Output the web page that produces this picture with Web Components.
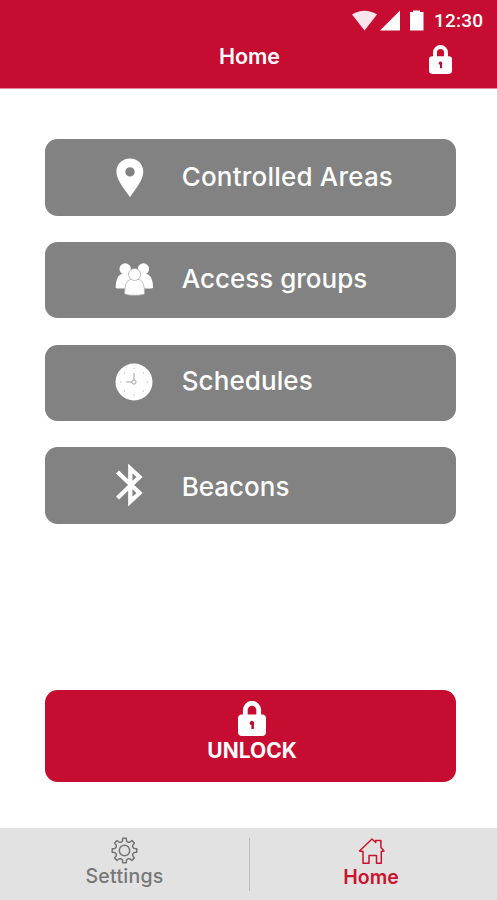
<!DOCTYPE html>
<html lang="en">
<head>
<meta charset="utf-8">
<title>Home</title>
<style>
html,body{margin:0;height:100%}
body{background:#fff;font-family:Inter,"Liberation Sans",sans-serif;overflow:hidden}
</style>
</head>
<body>
<access-app></access-app>
<script>
const define = (name, html) => customElements.define(name, class extends HTMLElement {
  constructor() {
    super();
    const t = document.createElement('template');
    t.innerHTML = html;
    this.attachShadow({ mode: 'open' }).append(t.content.cloneNode(true));
  }
});

define('lock-icon', `<style>:host{display:block;width:28px;height:35px}svg{display:block;width:100%;height:100%}</style>
<svg viewBox="0 0 28 35"><path d="M7.300 16V9.200a6.700 6.900 0 0 1 13.400 0V16" fill="none" stroke="#fff" stroke-width="4.800"/><rect y="13.600" width="28" height="21.400" rx="4" fill="#fff"/><path d="M12 23.400a2.300 2.300 0 1 1 3.900 0v4.600h-2.500v-4z" fill="#b51032"/></svg>`);

define('pin-icon', `<style>:host{display:block}svg{display:block}</style>
<svg width="29" height="40" viewBox="-1 0 29 40"><path fill="#fff" fill-rule="evenodd" d="M14 .5C6.300.5.400 6.200.400 13.800.400 22 8.500 31 14 39.300 19.500 31 27.300 22 27.300 13.800 27.300 6.200 21.600.5 14 .5zM14 9.200a4.700 4.700 0 1 1 0 9.400 4.700 4.700 0 0 1 0-9.400z"/></svg>`);

define('people-icon', `<style>:host{display:block}svg{display:block}</style>
<svg width="39" height="33" viewBox="0 0 39 33"><g fill="#fff">
<circle cx="10.200" cy="6" r="5.700"/><circle cx="28.400" cy="6" r="5.700"/>
<path d="M.700 24.500c0-8 2.400-12.500 6.300-13.500h7c3 0 5 3 5.500 14.500H4c-2 0-3.300-.2-3.300-1z"/>
<path d="M38 24.500c0-8-2.400-12.500-6.300-13.500h-7c-3 0-5 3-5.500 14.500h15.500c2 0 3.300-.2 3.300-1z"/></g>
<g fill="#fff" stroke="#acacac" stroke-width=".8"><path d="M9.700 30.500c0-8.500 2-12.500 5.500-14h8.900c3.500 1.500 5.500 5.500 5.500 14 0 2.400-19.900 2.400-19.900 0z"/><circle cx="19.600" cy="11.500" r="6"/></g></svg>`);

define('clock-icon', `<style>:host{display:block}svg{display:block}</style>
<svg width="38" height="38" viewBox="0 0 38 38"><circle cx="19" cy="19" r="18.500" fill="#fff"/>
<g fill="#bdbdbd"><circle cx="9.500" cy="10" r=".7"/><circle cx="28.500" cy="10" r=".7"/><circle cx="9.500" cy="28" r=".7"/><circle cx="28.500" cy="28" r=".7"/><circle cx="19" cy="5.500" r=".6"/><circle cx="19" cy="32" r=".7"/><circle cx="5.700" cy="19" r=".8"/><circle cx="32.300" cy="19" r=".8"/></g>
<g fill="none" stroke="#999" stroke-width=".9"><path d="M19 17V10M17 19h-6"/><circle cx="19" cy="19" r="2.100"/></g></svg>`);

define('bluetooth-icon', `<style>:host{display:block}svg{display:block}</style>
<svg width="29" height="42" viewBox="0 0 29 42"><path d="M2.500 8 24.500 29 15.300 37.500V4.500L24.500 13 2.500 34" fill="none" stroke="#fff" stroke-width="4.300"/></svg>`);

define('gear-icon', `<style>:host{display:block}svg{display:block}</style>
<svg width="27" height="27" viewBox="-13.500 -13.500 27 27"><g fill="none" stroke="#747474" stroke-width="1.500"><path id="g" stroke-linejoin="round"/><circle r="5.200"/></g></svg>`);

define('home-icon', `<style>:host{display:block}svg{display:block}</style>
<svg width="28" height="28" viewBox="0 0 28 28"><path d="M2.500 14 15 2 18.700 5.500V3.500h5.200V10.500L27 14 24.300 14.500V26.300H19.500V18.500H12V26.300H6V14.500z" fill="none" stroke="#c8142f" stroke-width="1.500" stroke-linejoin="round"/></svg>`);

define('status-bar', `<style>
:host{display:flex;align-items:flex-start;height:41px;padding-top:10px;box-sizing:border-box}
svg{display:block;margin-left:352px;flex:none}
span{margin-left:9px;font:500 19px/21px Roboto,sans-serif;color:#fff;letter-spacing:.2px;white-space:nowrap}
</style>
<svg width="73" height="22" viewBox="0 0 73 22"><path d="M0 4.500Q12.500-3 25 4.500L12.500 20.500z" fill="#fbe5ec"/><path d="M28 20.500 48 .500V20.500zM58 3.500V2h3V.600h7V2h3.500V20.500H58z" fill="#fff"/></svg><span>12:30</span>`);

define('app-header', `<style>
:host{display:block;height:89px;background:#c60c30;border-bottom:1px solid #e58a9c;box-sizing:border-box}
.bar{display:grid;grid-template-columns:1fr auto 1fr;align-items:start}
.title{grid-column:2;margin:2px 0 0 2px;font-size:21.500px;line-height:26px;font-weight:600;color:#fff}
lock-icon{width:23px;height:29px;justify-self:end;margin:4px 45px 0 0}
</style><status-bar></status-bar><div class="bar"><span class="title"><slot></slot></span><lock-icon></lock-icon></div>`);

define('menu-card', `<style>
:host{display:grid;grid-template-columns:70px 67px 1fr;height:76.300px;border-radius:12.500px;background:#828282;align-items:start}
::slotted([slot=icon]){margin-top:var(--icon-top)}
.label{grid-column:3;margin-top:var(--label-top);color:#fff;font-size:26px;line-height:32px;font-weight:500;letter-spacing:var(--track,.2px);white-space:nowrap}
.icon{grid-column:2}
</style><div class="icon"><slot name="icon"></slot></div><div class="label"><slot></slot></div>`);

define('unlock-button', `<style>
:host{display:flex;flex-direction:column;align-items:center;height:92px;border-radius:12.500px;background:#c60c30;padding-top:11px;box-sizing:border-box}
lock-icon{margin-left:3px}
span{margin:2px 0 0 3px;font-size:21px;line-height:26px;font-weight:700;color:#fff}
</style><lock-icon></lock-icon><span><slot></slot></span>`);

define('nav-tab', `<style>
:host{display:flex;flex-direction:column;align-items:center;padding-top:9.500px;color:#777}
span{font-size:19.500px;line-height:24px;font-weight:var(--weight,500);letter-spacing:var(--track,.25px)}
</style><slot name="icon"></slot><span><slot></slot></span>`);

define('bottom-nav', `<style>
:host{display:grid;grid-template-columns:249px 1px 1fr;height:72.500px;background:#e2e2e2}
nav-tab:first-child{padding-left:1px}
i{margin-top:10px;height:53px;background:#bbb}
.home{color:#c8142f;margin-right:5px;padding-top:9px;--weight:600;--track:0px}
</style><nav-tab><gear-icon slot="icon"></gear-icon>Settings</nav-tab><i></i><nav-tab class="home"><home-icon slot="icon"></home-icon>Home</nav-tab>`);

define('access-app', `<style>
:host{display:flex;flex-direction:column;height:900px;width:497px;background:#fff}
main{flex:1;display:flex;flex-direction:column;padding:50.400px 40.600px 46px 44.700px}
.menu{display:grid;gap:26.400px}
unlock-button{margin-top:auto}
</style>
<app-header>Home</app-header>
<main><div class="menu">
<menu-card style="--icon-top:19px;--label-top:22px"><pin-icon slot="icon"></pin-icon>Controlled Areas</menu-card>
<menu-card style="--icon-top:21px;--label-top:21px;--track:0px"><people-icon slot="icon"></people-icon>Access groups</menu-card>
<menu-card style="--icon-top:18.500px;--label-top:20.500px;--track:.1px"><clock-icon slot="icon"></clock-icon>Schedules</menu-card>
<menu-card style="--icon-top:16.500px;--label-top:23.500px;--track:0px"><bluetooth-icon slot="icon"></bluetooth-icon>Beacons</menu-card>
</div><unlock-button>UNLOCK</unlock-button></main>
<bottom-nav></bottom-nav>`);

/* Eight-toothed gear outline in polar steps */
const nav = document.querySelector('access-app').shadowRoot.querySelector('bottom-nav').shadowRoot;
const gear = nav.querySelector('gear-icon').shadowRoot.querySelector('#g');
let d = '';
for (let k = 0; k < 8; k++) {
  [[-12, 9.8], [-8, 12.4], [8, 12.4], [12, 9.8], [22.5, 8.9]].forEach(([a, r]) => {
    const t = (k * 45 + a) * Math.PI / 180;
    d += (d ? 'L' : 'M') + (r * Math.sin(t)).toFixed(2) + ' ' + (-r * Math.cos(t)).toFixed(2);
  });
}
gear.setAttribute('d', d + 'Z');
</script>
</body>
</html>
